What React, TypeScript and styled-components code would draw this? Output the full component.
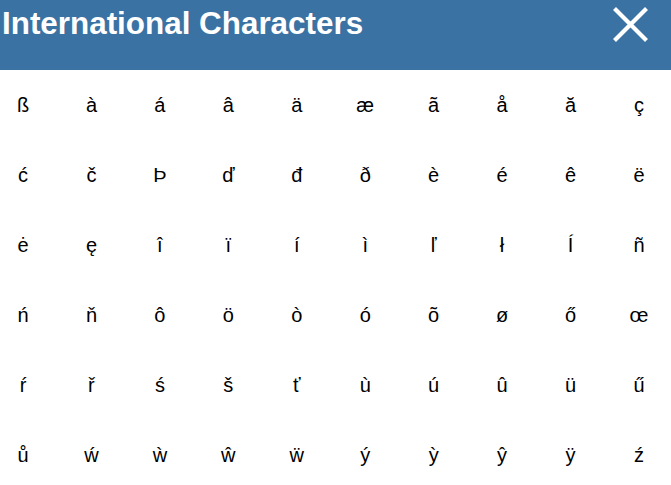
import React from "react";
import styled, { createGlobalStyle } from "styled-components";

const GlobalStyle = createGlobalStyle`
  html, body { margin: 0; padding: 0; background: #ffffff; }
  body { font-family: "Liberation Sans", Arial, sans-serif; overflow: hidden; }
`;

const Panel = styled.div`
  width: 671px;
  height: 485px;
  overflow: hidden;
  background: #ffffff;
`;

const Header = styled.div`
  height: 70px;
  background: #3b72a4;
  display: flex;
  align-items: flex-start;
  justify-content: space-between;
  box-sizing: border-box;
  padding: 0 22px 0 2px;
`;

const Title = styled.h1`
  margin: 0;
  padding-top: 6px;
  font-family: "Liberation Sans", Arial, sans-serif;
  font-weight: bold;
  font-size: 31.4px;
  line-height: 36px;
  color: #ffffff;
  white-space: nowrap;
`;

const CloseButton = styled.button`
  border: none;
  background: transparent;
  padding: 0;
  margin-top: 6px;
  width: 37px;
  height: 37px;
  cursor: pointer;
  display: flex;
  align-items: center;
  justify-content: center;
`;

const Grid = styled.div`
  display: grid;
  grid-template-columns: repeat(10, 46px);
  grid-auto-rows: 70px;
  column-gap: 22.44px;
`;

const CharCell = styled.button`
  border: none;
  background: transparent;
  padding: 0;
  display: flex;
  align-items: center;
  justify-content: center;
  font-family: "Liberation Sans", Arial, sans-serif;
  font-size: 20px;
  line-height: 23px;
  color: #000000;
  cursor: pointer;
`;

const chars = [
  "ß","à","á","â","ä","æ","ã","å","ă","ç",
  "ć","č","Þ","ď","đ","ð","è","é","ê","ë",
  "ė","ę","î","ï","í","ì","ľ","ł","Í","ñ",
  "ń","ň","ô","ö","ò","ó","õ","ø","ő","œ",
  "ŕ","ř","ś","š","ť","ù","ú","û","ü","ű",
  "ů","ẃ","ẁ","ŵ","ẅ","ý","ỳ","ŷ","ÿ","ź",
];

export default function App() {
  return (
    <>
      <GlobalStyle />
      <Panel>
        <Header>
          <Title>International Characters</Title>
          <CloseButton aria-label="Close">
            <svg width="37" height="37" viewBox="0 0 37 37">
              <path d="M2.5 2.5 L34.5 34.5 M34.5 2.5 L2.5 34.5" stroke="#ffffff" strokeWidth="4.2" strokeLinecap="butt" />
            </svg>
          </CloseButton>
        </Header>
        <Grid>
          {chars.map((c, i) => (
            <CharCell key={i}>{c}</CharCell>
          ))}
        </Grid>
      </Panel>
    </>
  );
}
